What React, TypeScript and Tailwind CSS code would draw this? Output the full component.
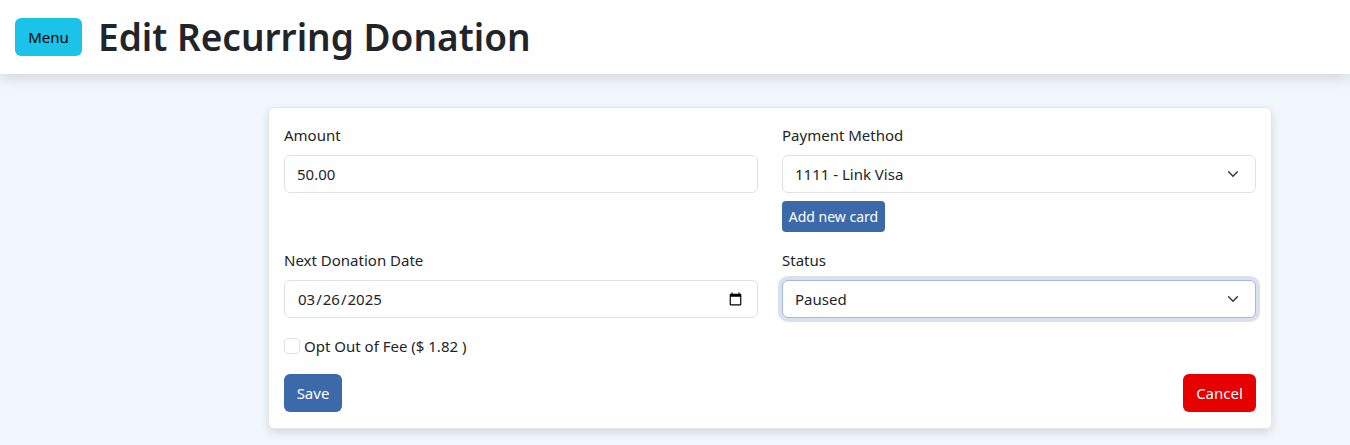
import React from 'react';

const font = { fontFamily: '"Noto Sans", "Open Sans", sans-serif' };

function Chevron() {
  return (
    <svg
      className="pointer-events-none absolute right-[16px] top-1/2 h-[14px] w-[14px] -translate-y-1/2"
      viewBox="0 0 16 16"
      fill="none"
      stroke="#343a40"
      strokeWidth="1.7"
      strokeLinecap="round"
      strokeLinejoin="round"
    >
      <path d="m3 5.5 5 5 5-5" />
    </svg>
  );
}

export default function App() {
  return (
    <div className="min-h-[445px] bg-[#f2f6fd] text-[#212529]" style={font}>
      {/* Header */}
      <header className="flex h-[74px] items-center gap-4 bg-white px-[15px] shadow-[0_4px_14px_rgba(0,0,0,0.14)]">
        <button className="h-[38px] w-[67px] rounded-md bg-[#1bc3e9] text-[15px] text-black">Menu</button>
        <h1 className="text-[37px] font-semibold leading-tight">Edit Recurring Donation</h1>
      </header>

      {/* Form card */}
      <div className="ml-[268px] mt-[33px] w-[1004px] rounded-md border border-[#e3e6ea] bg-white p-[15px] pb-4 shadow-[0_4px_10px_rgba(0,0,0,0.12)]">
        <div className="grid grid-cols-2 gap-x-6">
          <div className="mb-4">
            <label className="mb-2 block text-[15px] leading-6">Amount</label>
            <input
              className="h-[38px] w-full rounded-md border border-[#dee2e6] px-3 text-[15px] outline-none"
              defaultValue="50.00"
            />
          </div>
          <div className="mb-4">
            <label className="mb-2 block text-[15px] leading-6">Payment Method</label>
            <div className="relative">
              <select className="h-[38px] w-full appearance-none rounded-md border border-[#dee2e6] bg-white pl-3 pr-10 text-[15px] outline-none">
                <option>1111 - Link Visa</option>
              </select>
              <Chevron />
            </div>
            <button className="mt-2 h-[31px] w-[103px] rounded bg-[#3c69aa] text-[14px] text-white">Add new card</button>
          </div>

          <div className="mb-4">
            <label className="mb-2 block text-[15px] leading-6">Next Donation Date</label>
            <input
              type="date"
              className="h-[38px] w-full rounded-md border border-[#dee2e6] px-3 text-[15px] outline-none"
              defaultValue="2025-03-26"
            />
          </div>
          <div className="mb-4">
            <label className="mb-2 block text-[15px] leading-6">Status</label>
            <div className="relative">
              <select className="h-[38px] w-full appearance-none rounded-md border border-[#a7b7d6] bg-white pl-3 pr-10 text-[15px] shadow-[0_0_0_4px_rgba(160,180,215,0.4)] outline-none">
                <option>Paused</option>
              </select>
              <Chevron />
            </div>
          </div>
        </div>

        <label className="mb-4 flex h-6 items-center gap-1 text-[15px]">
          <span className="h-4 w-4 rounded border border-[#dee2e6] bg-white" />
          Opt Out of Fee ($ 1.82 )
        </label>

        <div className="flex justify-between">
          <button className="h-[38px] w-[58px] rounded-md bg-[#3c69aa] text-[15px] text-white">Save</button>
          <button className="h-[38px] w-[73px] rounded-md bg-[#e60000] text-[15px] text-white">Cancel</button>
        </div>
      </div>
    </div>
  );
}
